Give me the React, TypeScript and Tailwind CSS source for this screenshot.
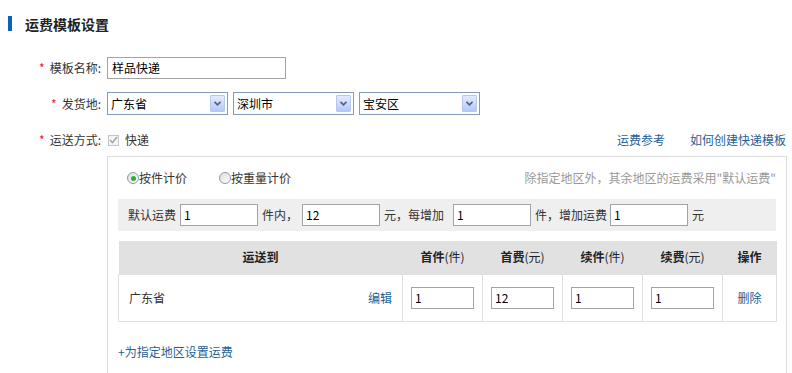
import React from 'react';

const font = { fontFamily: '"Noto Sans CJK SC", "Liberation Sans", sans-serif' };

// Old-style select with blue arrow button
const FakeSelect = ({ value }: { value: string }) => (
  <div className="flex h-[23px] w-[121px] items-center border border-[#7f9db9] bg-white pl-[1px] pr-[2px]">
    <span className="flex-1 pl-[2px] text-[12px] leading-none text-black">{value}</span>
    <div className="flex h-[17px] w-[15px] items-center justify-center rounded-[1px] border border-[#b7c8f0] bg-gradient-to-b from-[#e4ebfd] to-[#b5c8f7]">
      <svg width="7" height="5" viewBox="0 0 7 5">
        <path d="M0.5 0.8 L3.5 3.8 L6.5 0.8" stroke="#4d6185" strokeWidth="1.6" fill="none" />
      </svg>
    </div>
  </div>
);

const TextBox = ({ value, w = 'w-[78px]' }: { value: string; w?: string }) => (
  <div className={`flex h-[22px] ${w} items-center border border-[#a3a3a3] bg-white px-[3px] text-[12px] text-black`}>
    {value}
  </div>
);

const Radio = ({ checked, label }: { checked?: boolean; label: string }) => (
  <div className="flex items-center">
    <span className="flex h-[12px] w-[12px] items-center justify-center rounded-full border border-[#8d9aa8] bg-gradient-to-br from-[#dcdcdc] to-white">
      {checked && <span className="h-[5px] w-[5px] rounded-full bg-[#2fae2f]" />}
    </span>
    <span className="text-[12px] text-[#333]">{label}</span>
  </div>
);

const Label = ({ text }: { text: string }) => (
  <div className="w-[101px] shrink-0 text-right text-[12px] text-[#333]">
    <span className="mr-[5px] text-[#d23]">*</span>
    {text}
  </div>
);

const cols = ['首件', '首费', '续件', '续费'];
const units = ['(件)', '(元)', '(件)', '(元)'];
const vals = ['1', '12', '1', '1'];

export default function App() {
  return (
    <div className="h-[373px] w-[792px] overflow-hidden bg-white" style={font}>
      {/* Title */}
      <div className="flex items-center pt-[16px]">
        <div className="ml-[8px] h-[15px] w-[4px] bg-[#0b63b8]" />
        <h1 className="ml-[13px] text-[14px] font-bold leading-none text-[#222]">运费模板设置</h1>
      </div>

      {/* Name */}
      <div className="mt-[26px] flex items-center">
        <Label text="模板名称:" />
        <div className="ml-[6px] flex h-[22px] w-[179px] items-center border border-[#a3a3a3] px-[4px] text-[12px] text-black">
          样品快递
        </div>
      </div>

      {/* From */}
      <div className="mt-[13px] flex items-center">
        <Label text="发货地:" />
        <div className="ml-[6px] flex gap-[5px]">
          <FakeSelect value="广东省" />
          <FakeSelect value="深圳市" />
          <FakeSelect value="宝安区" />
        </div>
      </div>

      {/* Delivery method */}
      <div className="mt-[16px] flex items-center">
        <Label text="运送方式:" />
        <div className="ml-[7px] flex flex-1 items-center pr-[6px]">
          <span className="flex h-[11px] w-[11px] items-center justify-center border border-[#c5c5c5] bg-[#f4f4f4]">
            <svg width="9" height="8" viewBox="0 0 9 8">
              <path d="M1 4 L3.5 6.5 L8 1" stroke="#a8a8a8" strokeWidth="1.6" fill="none" />
            </svg>
          </span>
          <span className="ml-[6px] text-[12px] text-[#333]">快递</span>
          <div className="ml-auto flex gap-[25px] text-[12px] text-[#1f5f95]">
            <span>运费参考</span>
            <span>如何创建快递模板</span>
          </div>
        </div>
      </div>

      {/* Panel */}
      <div className="ml-[107px] mt-[7px] mr-[5px] h-[220px] border border-[#dcdcdc] px-[10px]">
        <div className="flex h-[42px] items-center pl-[9px]">
          <Radio checked label="按件计价" />
          <div className="ml-[32px]">
            <Radio label="按重量计价" />
          </div>
          <span className="ml-auto text-[12px] text-[#999]">除指定地区外，其余地区的运费采用"默认运费"</span>
        </div>

        <div className="flex h-[32px] items-center bg-[#efefef] pl-[10px] text-[12px] text-[#333]">
          <span>默认运费</span>
          <div className="ml-[4px]"><TextBox value="1" /></div>
          <span className="ml-[4px]">件内，</span>
          <div className="ml-[4px]"><TextBox value="12" /></div>
          <span className="ml-[4px]">元，每增加</span>
          <div className="ml-[9px]"><TextBox value="1" /></div>
          <span className="ml-[4px]">件，增加运费</span>
          <div className="ml-[3px]"><TextBox value="1" /></div>
          <span className="ml-[4px]">元</span>
        </div>

        {/* Table */}
        <table className="mt-[10px] w-[658px] table-fixed border-collapse text-[12px]">
          <colgroup>
            <col className="w-[284px]" />
            <col className="w-[80px]" />
            <col className="w-[80px]" />
            <col className="w-[80px]" />
            <col className="w-[80px]" />
            <col className="w-[54px]" />
          </colgroup>
          <thead>
            <tr className="h-[33px] bg-[#e1e1e1] text-[#222]">
              <th className="font-bold">运送到</th>
              {cols.map((c, i) => (
                <th key={c}>
                  <span className="font-bold">{c}</span>
                  <span className="font-normal">{units[i]}</span>
                </th>
              ))}
              <th className="font-bold">操作</th>
            </tr>
          </thead>
          <tbody>
            <tr className="h-[47px]">
              <td className="border border-[#e0e0e0] px-[10px]">
                <div className="flex items-center">
                  <span className="text-[#333]">广东省</span>
                  <span className="ml-auto text-[#1f5f95]">编辑</span>
                </div>
              </td>
              {vals.map((v, i) => (
                <td key={i} className="border border-[#e0e0e0]">
                  <div className="flex justify-center">
                    <TextBox value={v} w="w-[63px]" />
                  </div>
                </td>
              ))}
              <td className="border border-[#e0e0e0] text-center text-[#1f5f95]">删除</td>
            </tr>
          </tbody>
        </table>

        <div className="mt-[21px] text-[12px] text-[#1f5f95]">+为指定地区设置运费</div>
      </div>
    </div>
  );
}
